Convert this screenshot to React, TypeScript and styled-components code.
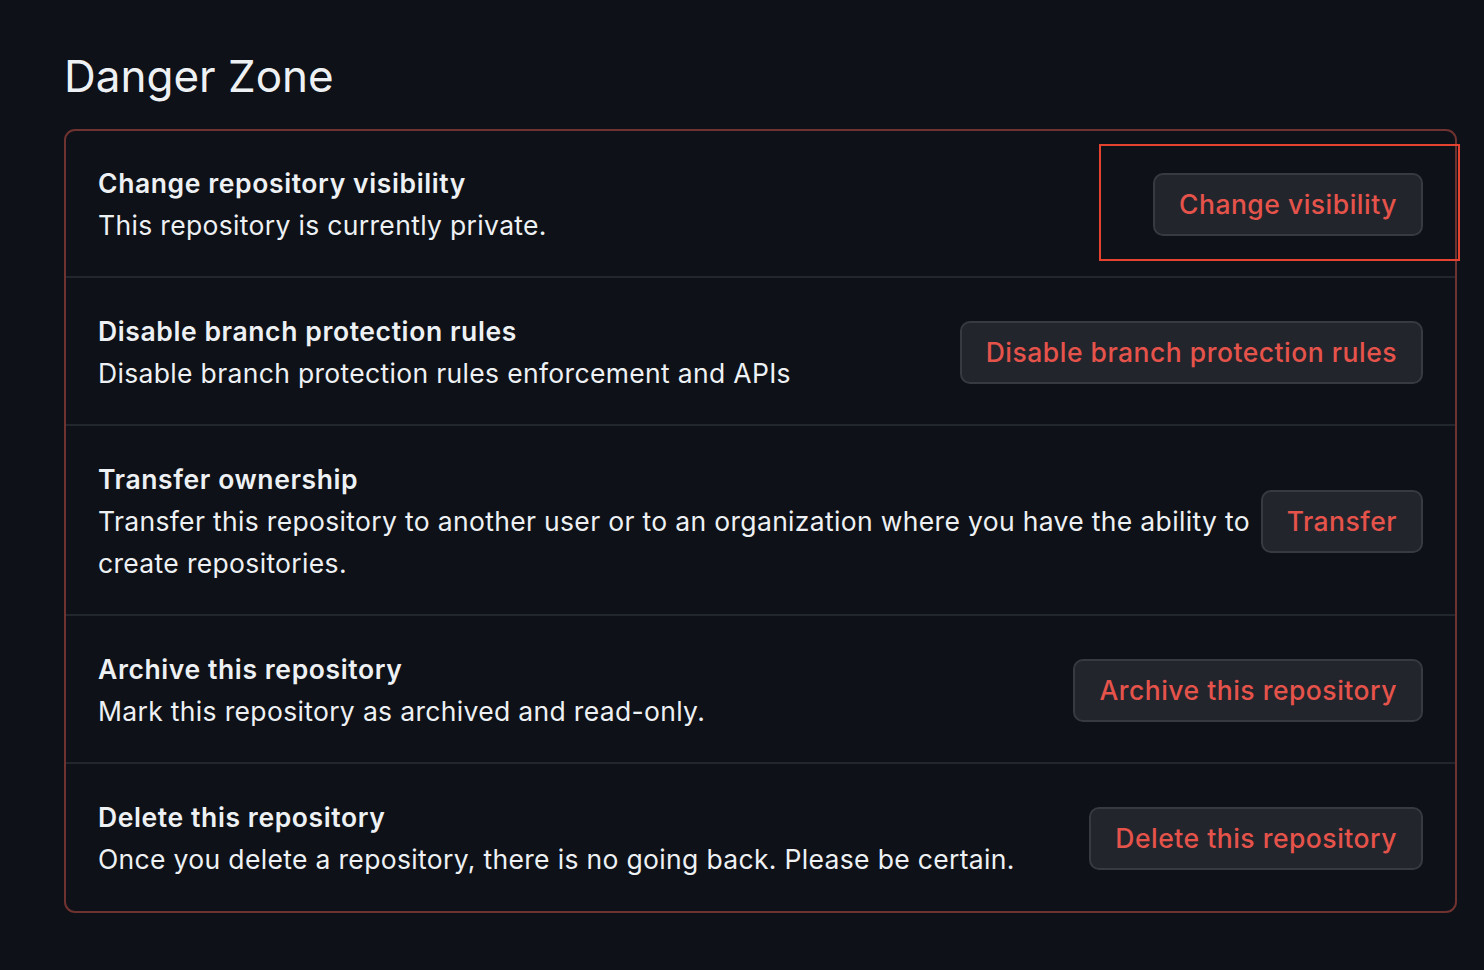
import styled, { createGlobalStyle } from 'styled-components';

const GlobalStyle = createGlobalStyle`
  html, body {
    margin: 0;
    padding: 0;
    background: #0e1117;
  }
  body {
    font-family: Inter, "Noto Sans", "Liberation Sans", sans-serif;
    color: #e6edf3;
  }
`;

const Page = styled.div`
  min-height: 970px;
  box-sizing: border-box;
  padding: 48px 27px 56px 64px;
  background: #0e1117;
`;

const Heading = styled.h2`
  margin: 0 0 24px;
  font-size: 44px;
  font-weight: 400;
  line-height: 57px;
  color: #eef1f4;
`;

const Box = styled.div`
  border: 2px solid #6e3230;
  border-radius: 11px;
`;

const Row = styled.div`
  display: flex;
  align-items: center;
  gap: 8px;
  padding: 32px 32px 30px 32px;
  & + & {
    border-top: 2px solid #22262d;
  }
  &:first-child {
    padding-top: 31px;
  }
  &:last-child {
    padding-bottom: 31px;
  }
`;

const Info = styled.div`
  flex: 1;
  min-width: 0;
`;

const Title = styled.div`
  font-size: 26.5px;
  font-weight: 600;
  line-height: 42px;
  letter-spacing: 0.6px;
  color: #eef1f4;
`;

const Desc = styled.div`
  font-size: 26.5px;
  line-height: 42px;
  letter-spacing: 0.33px;
  color: #eef1f4;
`;

const ButtonSlot = styled.div`
  position: relative;
  flex-shrink: 0;
`;

const DangerButton = styled.button`
  display: block;
  height: 63px;
  padding: 0 24px;
  border: 2px solid #373a41;
  border-radius: 10px;
  background: #22252c;
  color: #e5534b;
  font-family: Inter, "Noto Sans", "Liberation Sans", sans-serif;
  font-size: 26.5px;
  font-weight: 500;
  letter-spacing: 0.5px;
  white-space: nowrap;
  cursor: pointer;
`;

const Highlight = styled.span`
  position: absolute;
  left: -54px;
  right: -37px;
  top: -29px;
  bottom: -25px;
  border: 2px solid #e5432f;
  pointer-events: none;
`;

type Setting = {
  title: string;
  desc: string;
  action: string;
  marked?: boolean;
};

const settings: Setting[] = [
  {
    title: 'Change repository visibility',
    desc: 'This repository is currently private.',
    action: 'Change visibility',
    marked: true,
  },
  {
    title: 'Disable branch protection rules',
    desc: 'Disable branch protection rules enforcement and APIs',
    action: 'Disable branch protection rules',
  },
  {
    title: 'Transfer ownership',
    desc: 'Transfer this repository to another user or to an organization where you have the ability to create repositories.',
    action: 'Transfer',
  },
  {
    title: 'Archive this repository',
    desc: 'Mark this repository as archived and read-only.',
    action: 'Archive this repository',
  },
  {
    title: 'Delete this repository',
    desc: 'Once you delete a repository, there is no going back. Please be certain.',
    action: 'Delete this repository',
  },
];

export default function App() {
  return (
    <>
      <GlobalStyle />
      <Page>
        <Heading>Danger Zone</Heading>
        <Box>
          {settings.map((s) => (
            <Row key={s.title}>
              <Info>
                <Title>{s.title}</Title>
                <Desc>{s.desc}</Desc>
              </Info>
              <ButtonSlot>
                <DangerButton type="button">{s.action}</DangerButton>
                {s.marked && <Highlight />}
              </ButtonSlot>
            </Row>
          ))}
        </Box>
      </Page>
    </>
  );
}
